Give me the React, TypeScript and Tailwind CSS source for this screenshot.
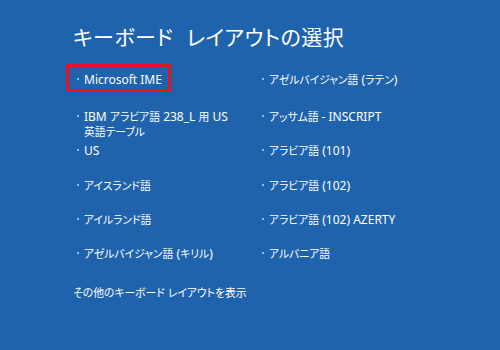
import React from "react";

const left: string[][] = [
  ["Microsoft IME"],
  ["IBM アラビア語 238_L 用 US", "英語テーブル"],
  ["US"],
  ["アイスランド語"],
  ["アイルランド語"],
  ["アゼルバイジャン語 (キリル)"],
];
const right: string[] = [
  "アゼルバイジャン語 (ラテン)",
  "アッサム語 - INSCRIPT",
  "アラビア語 (101)",
  "アラビア語 (102)",
  "アラビア語 (102) AZERTY",
  "アルバニア語",
];

function Mixed({ text }: { text: string }) {
  const runs = text.match(/[\x00-\x7f]+|[^\x00-\x7f]+/g) || [];
  return (
    <>
      {runs.map((r, i) =>
        /^[\x00-\x7f]/.test(r) ? (
          <span key={i} className="text-[12px]">{r}</span>
        ) : (
          <span key={i} className="text-[10.8px]">{r}</span>
        )
      )}
    </>
  );
}

function Item({ lines, boxed }: { lines: string[]; boxed?: boolean }) {
  return (
    <div className="relative flex items-start">
      {boxed && (
        <div className="absolute left-[-11px] top-[-8px] w-[105px] h-[28px] border-[3px] border-[#e8141c]" />
      )}
      <span className="mt-[6px] mr-[5px] w-[2px] h-[2px] bg-[#6fd0fa] shrink-0" />
      <div className="leading-[15px]">
        {lines.map((l, i) => (
          <div key={i} className="whitespace-nowrap">
            <Mixed text={l} />
          </div>
        ))}
      </div>
    </div>
  );
}

export default function App() {
  return (
    <div
      className="w-[500px] h-[350px] bg-[#1f63ad] text-white overflow-hidden pl-[73px] pt-[22px] [font-feature-settings:'palt']"
      style={{ fontFamily: '"Noto Sans", "Noto Sans CJK JP", sans-serif' }}
    >
      <div className="text-[21px] leading-[28px] flex gap-[13px] tracking-[0.5px]" style={{ fontFamily: '"Noto Sans CJK JP", sans-serif' }}>
        <span>キーボード</span>
        <span>レイアウトの選択</span>
      </div>
      <div className="mt-[22px] ml-[4px] grid grid-cols-[185px_1fr] grid-rows-[37px_34px_35px_34px_34px_35px] text-[12px]">
        <Item lines={left[0]} boxed />
        <Item lines={[right[0]]} />
        <Item lines={left[1]} />
        <Item lines={[right[1]]} />
        <Item lines={left[2]} />
        <Item lines={[right[2]]} />
        <Item lines={left[3]} />
        <Item lines={[right[3]]} />
        <Item lines={left[4]} />
        <Item lines={[right[4]]} />
        <Item lines={left[5]} />
        <Item lines={[right[5]]} />
      </div>
      <div className="mt-[3px] leading-[15px] whitespace-nowrap">
        <Mixed text="その他のキーボード レイアウトを表示" />
      </div>
    </div>
  );
}
